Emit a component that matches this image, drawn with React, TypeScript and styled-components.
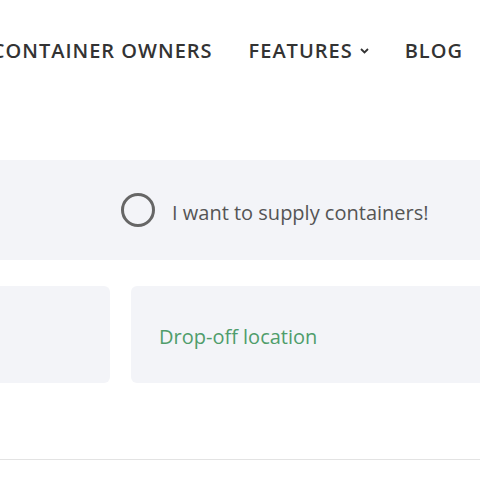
import styled, { createGlobalStyle } from "styled-components";

const GlobalStyle = createGlobalStyle`
  html, body {
    margin: 0;
    padding: 0;
    background: #ffffff;
    font-family: "Open Sans", "Liberation Sans", sans-serif;
  }
  #root {
    width: 480px;
    height: 480px;
    overflow: hidden;
  }
`;

const Page = styled.div`
  width: 480px;
  height: 480px;
  overflow: hidden;
  display: flex;
  flex-direction: column;
`;

const Nav = styled.nav`
  height: 104px;
  display: flex;
  justify-content: flex-end;
  align-items: flex-start;
  padding: 37px 17px 0 0;
  box-sizing: border-box;
  gap: 36px;
  white-space: nowrap;
`;

const NavItem = styled.a`
  display: flex;
  align-items: center;
  gap: 7px;
  font-size: 20px;
  font-weight: 600;
  letter-spacing: 1px;
  color: #333333;
  text-decoration: none;
  line-height: 28px;
  flex-shrink: 0;
`;

const Chevron = () => (
  <svg width="9" height="6" viewBox="0 0 9 6">
    <path d="M1 1l3.5 3.5L8 1" fill="none" stroke="#333" strokeWidth="1.8" />
  </svg>
);

const Band = styled.div`
  margin-top: 56px;
  height: 100px;
  background: #f3f4f8;
  display: flex;
  align-items: center;
  padding-left: 121px;
  gap: 17px;
`;

const Radio = styled.span`
  width: 34px;
  height: 34px;
  box-sizing: border-box;
  border: 3px solid #666666;
  border-radius: 50%;
  flex-shrink: 0;
`;

const RadioLabel = styled.span`
  font-size: 20px;
  color: #555555;
  margin-top: 4px;
`;

const Cards = styled.div`
  margin-top: 26px;
  display: grid;
  grid-template-columns: 110px 400px;
  gap: 21px;
  height: 97px;
`;

const Card = styled.div<{ $left?: boolean }>`
  background: #f3f4f8;
  border-radius: ${(p) => (p.$left ? "0 6px 6px 0" : "6px 0 0 6px")};
  display: flex;
  align-items: center;
  padding-left: 28px;
`;

const CardLabel = styled.span`
  font-size: 20px;
  color: #4f9d6b;
  margin-top: 3px;
`;

const Rule = styled.hr`
  margin: 76px 0 0;
  border: none;
  border-top: 1px solid #e3e3e3;
  height: 0;
`;

export default function App() {
  return (
    <>
      <GlobalStyle />
      <Page>
        <Nav>
          <NavItem>CONTAINER OWNERS</NavItem>
          <NavItem>
            FEATURES
            <Chevron />
          </NavItem>
          <NavItem>BLOG</NavItem>
        </Nav>
        <Band>
          <Radio />
          <RadioLabel>I want to supply containers!</RadioLabel>
        </Band>
        <Cards>
          <Card $left />
          <Card>
            <CardLabel>Drop-off location</CardLabel>
          </Card>
        </Cards>
        <Rule />
      </Page>
    </>
  );
}
